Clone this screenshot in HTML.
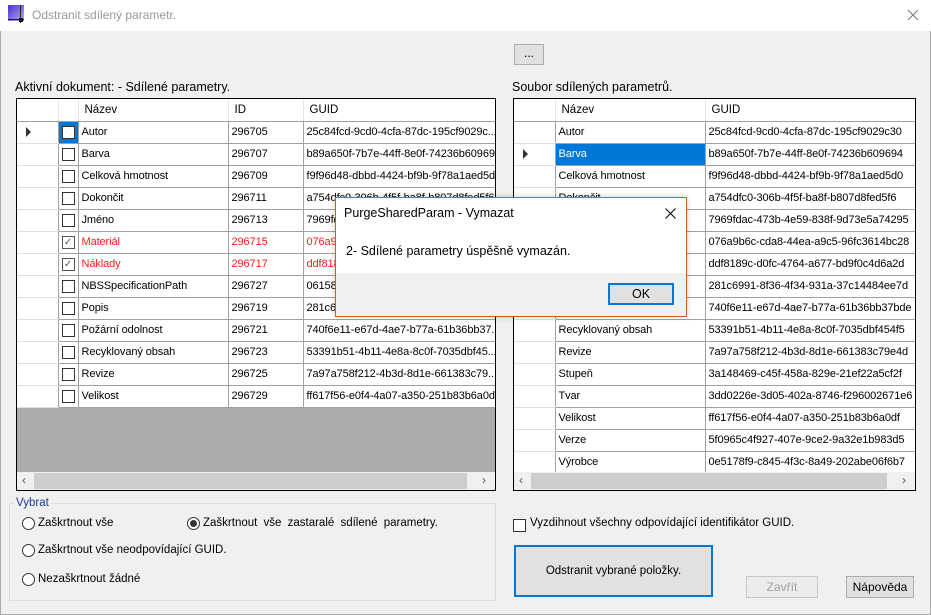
<!DOCTYPE html>
<html><head><meta charset="utf-8"><style>
*{box-sizing:border-box;margin:0;padding:0}
body{width:931px;height:615px;background:#f0f0f0;font-family:"Liberation Sans",sans-serif;font-size:12px;color:#000;position:relative;overflow:hidden}
.a{position:absolute}
.win{left:0;top:0;width:931px;height:615px;border:1px solid #aaa;border-top:none}
.title{left:0;top:0;width:931px;height:31px;background:#fff}
.grid{background:#fff;border:1px solid #000;overflow:hidden}
table{border-collapse:collapse;table-layout:fixed;font-size:11px}
td{height:22px;border:1px solid #a0a0a0;padding:0 3px;white-space:nowrap;overflow:hidden;letter-spacing:-0.1px}
th{height:22px;font-weight:normal;text-align:left;padding:0 6px;border-right:1px solid #e6e6e6;border-bottom:1px solid #a0a0a0;background:#fff;font-size:11.5px}
td.rh{border-left:none;border-color:#a0a0a0 #a0a0a0 #e0e0e0 #a0a0a0}
.cb{display:inline-block;width:13px;height:13px;border:1px solid #333;background:#fff;vertical-align:middle;position:relative}
.red{color:#ff1a1a}
.tri{display:inline-block;width:0;height:0;border-left:5px solid #333;border-top:5px solid transparent;border-bottom:5px solid transparent;margin-left:6px;vertical-align:middle}
.sb{background:#f0f0f0}
.btn{background:#e1e1e1;border:1px solid #adadad;text-align:center}
.rad{width:13px;height:13px;border:1px solid #333;border-radius:50%;background:#fff}
</style></head><body>
<div class="a win"></div>
<div class="a title"></div>
<svg class="a" style="left:8px;top:5px" width="17" height="18"><defs><linearGradient id="g" x1="0" y1="0" x2="1" y2="1"><stop offset="0" stop-color="#4a2fd0"/><stop offset="1" stop-color="#b7aaf0"/></linearGradient></defs><rect x="0" y="0" width="16" height="16" fill="url(#g)"/><path d="M0 14.5H16M12.5 0V18" stroke="#222" stroke-width="1"/><rect x="11" y="13" width="4" height="4" fill="#111"/></svg>
<div class="a" style="left:32px;top:8px;font-size:12px;color:#999">Odstranit sdílený parametr.</div>
<svg class="a" style="left:907px;top:9px" width="12" height="12"><path d="M1 1L11 11M11 1L1 11" stroke="#777" stroke-width="1"/></svg>

<div class="a btn" style="left:514px;top:44px;width:30px;height:21px;line-height:17px">...</div>

<div class="a" style="left:15px;top:80px;font-size:12.5px">Aktivní dokument: - Sdílené parametry.</div>
<div class="a" style="left:512px;top:80px;font-size:12.5px">Soubor sdílených parametrů.</div>

<div class="a grid" style="left:16px;top:98px;width:480px;height:393px;background:#ababab">
<table style="width:478px;background:#fff">
<colgroup><col style="width:41px"><col style="width:20px"><col style="width:150px"><col style="width:75px"><col style="width:192px"></colgroup>
<tr><th></th><th></th><th>Název</th><th>ID</th><th>GUID</th></tr>
<tr><td class="rh"><span class="tri"></span></td><td style="padding:0 3px;background:#0078d7"><span class="cb"></span></td><td>Autor</td><td>296705</td><td>25c84fcd-9cd0-4cfa-87dc-195cf9029c...</td></tr>
<tr><td class="rh"></td><td><span class="cb"></span></td><td>Barva</td><td>296707</td><td>b89a650f-7b7e-44ff-8e0f-74236b609694</td></tr>
<tr><td class="rh"></td><td><span class="cb"></span></td><td>Celková hmotnost</td><td>296709</td><td>f9f96d48-dbbd-4424-bf9b-9f78a1aed5d0</td></tr>
<tr><td class="rh"></td><td><span class="cb"></span></td><td>Dokončit</td><td>296711</td><td>a754dfc0-306b-4f5f-ba8f-b807d8fed5f6</td></tr>
<tr><td class="rh"></td><td><span class="cb"></span></td><td>Jméno</td><td>296713</td><td>7969fdac-473b-4e59-838f-9d73e5a74295</td></tr>
<tr class="red"><td class="rh"></td><td><span class="cb" style="border-color:#555;color:#555;font-size:10px;line-height:11px;text-align:center">✓</span></td><td>Materiál</td><td>296715</td><td>076a9b6c-cda8-44ea-a9c5-96fc3614bc28</td></tr>
<tr class="red"><td class="rh"></td><td><span class="cb" style="border-color:#555;color:#555;font-size:10px;line-height:11px;text-align:center">✓</span></td><td>Náklady</td><td>296717</td><td>ddf8189c-d0fc-4764-a677-bd9f0c4d6a2d</td></tr>
<tr><td class="rh"></td><td><span class="cb"></span></td><td>NBSSpecificationPath</td><td>296727</td><td>06158f00-1234-4a5b-9c8d-0e1f2a3b4c5d</td></tr>
<tr><td class="rh"></td><td><span class="cb"></span></td><td>Popis</td><td>296719</td><td>281c6991-8f36-4f34-931a-37c14484ee7d</td></tr>
<tr><td class="rh"></td><td><span class="cb"></span></td><td>Požární odolnost</td><td>296721</td><td>740f6e11-e67d-4ae7-b77a-61b36bb37...</td></tr>
<tr><td class="rh"></td><td><span class="cb"></span></td><td>Recyklovaný obsah</td><td>296723</td><td>53391b51-4b11-4e8a-8c0f-7035dbf45...</td></tr>
<tr><td class="rh"></td><td><span class="cb"></span></td><td>Revize</td><td>296725</td><td>7a97a758f212-4b3d-8d1e-661383c79...</td></tr>
<tr><td class="rh"></td><td><span class="cb"></span></td><td>Velikost</td><td>296729</td><td>ff617f56-e0f4-4a07-a350-251b83b6a0df</td></tr>
</table>
<div class="a sb" style="left:0;top:373px;width:478px;height:18px"><div class="a" style="left:17px;top:1px;width:433px;height:16px;background:#cdcdcd"></div><span class="a" style="left:5px;top:1px;color:#555;font-size:12px">‹</span><span class="a" style="left:465px;top:1px;color:#555;font-size:12px">›</span></div>
</div>

<div class="a grid" style="left:513px;top:98px;width:403px;height:393px">
<table style="width:401px">
<colgroup><col style="width:41px"><col style="width:150px"><col style="width:210px"></colgroup>
<tr><th></th><th>Název</th><th>GUID</th></tr>
<tr><td class="rh"></td><td>Autor</td><td>25c84fcd-9cd0-4cfa-87dc-195cf9029c30</td></tr>
<tr><td class="rh"><span class="tri"></span></td><td style="background:#0078d7;color:#fff">Barva</td><td>b89a650f-7b7e-44ff-8e0f-74236b609694</td></tr>
<tr><td class="rh"></td><td>Celková hmotnost</td><td>f9f96d48-dbbd-4424-bf9b-9f78a1aed5d0</td></tr>
<tr><td class="rh"></td><td>Dokončit</td><td>a754dfc0-306b-4f5f-ba8f-b807d8fed5f6</td></tr>
<tr><td class="rh"></td><td>Jméno</td><td>7969fdac-473b-4e59-838f-9d73e5a74295</td></tr>
<tr><td class="rh"></td><td>Materiál</td><td>076a9b6c-cda8-44ea-a9c5-96fc3614bc28</td></tr>
<tr><td class="rh"></td><td>Náklady</td><td>ddf8189c-d0fc-4764-a677-bd9f0c4d6a2d</td></tr>
<tr><td class="rh"></td><td>Popis</td><td>281c6991-8f36-4f34-931a-37c14484ee7d</td></tr>
<tr><td class="rh"></td><td>Požární odolnost</td><td>740f6e11-e67d-4ae7-b77a-61b36bb37bde</td></tr>
<tr><td class="rh"></td><td>Recyklovaný obsah</td><td>53391b51-4b11-4e8a-8c0f-7035dbf454f5</td></tr>
<tr><td class="rh"></td><td>Revize</td><td>7a97a758f212-4b3d-8d1e-661383c79e4d</td></tr>
<tr><td class="rh"></td><td>Stupeň</td><td>3a148469-c45f-458a-829e-21ef22a5cf2f</td></tr>
<tr><td class="rh"></td><td>Tvar</td><td>3dd0226e-3d05-402a-8746-f296002671e6</td></tr>
<tr><td class="rh"></td><td>Velikost</td><td>ff617f56-e0f4-4a07-a350-251b83b6a0df</td></tr>
<tr><td class="rh"></td><td>Verze</td><td>5f0965c4f927-407e-9ce2-9a32e1b983d5</td></tr>
<tr><td class="rh"></td><td>Výrobce</td><td>0e5178f9-c845-4f3c-8a49-202abe06f6b7</td></tr>
</table>
<div class="a sb" style="left:0;top:373px;width:401px;height:18px"><div class="a" style="left:17px;top:1px;width:356px;height:16px;background:#cdcdcd"></div><span class="a" style="left:5px;top:1px;color:#555;font-size:12px">‹</span><span class="a" style="left:388px;top:1px;color:#555;font-size:12px">›</span></div>
</div>

<!-- dialog -->
<div class="a" style="left:335px;top:197px;width:352px;height:120px;border:1px solid #c0622c;background:#fff;box-shadow:0 0 6px rgba(0,0,0,.2)">
<div class="a" style="left:8px;top:8px;font-size:12.5px">PurgeSharedParam - Vymazat</div>
<svg class="a" style="left:329px;top:10px" width="11" height="11"><path d="M0.5 0.5L10.5 10.5M10.5 0.5L0.5 10.5" stroke="#000" stroke-width="1"/></svg>
<div class="a" style="left:10px;top:46px;font-size:12.5px">2- Sdílené parametry úspěšně vymazán.</div>
<div class="a" style="left:0;top:75px;width:350px;height:43px;background:#f0f0f0"></div>
<div class="a btn" style="left:272px;top:85px;width:66px;height:22px;border:2px solid #0078d7;line-height:18px;font-size:12.5px">OK</div>
</div>

<!-- group -->
<div class="a" style="left:9px;top:503px;width:487px;height:98px;border:1px solid #dcdcdc"></div>
<div class="a" style="left:14px;top:497px;background:#f0f0f0;padding:0 2px;color:#1a3a8a;font-size:11.5px">Vybrat</div>
<div class="a rad" style="left:22px;top:517px"></div><div class="a" style="left:38px;top:517px;font-size:11.5px">Zaškrtnout vše</div>
<div class="a rad" style="left:187px;top:517px"></div><div class="a" style="left:190px;top:520px;width:7px;height:7px;border-radius:50%;background:#333"></div><div class="a" style="left:203px;top:517px;word-spacing:3px;font-size:11.5px">Zaškrtnout vše zastaralé sdílené parametry.</div>
<div class="a rad" style="left:22px;top:544px"></div><div class="a" style="left:38px;top:544px;font-size:11.5px">Zaškrtnout vše neodpovídající GUID.</div>
<div class="a rad" style="left:22px;top:573px"></div><div class="a" style="left:38px;top:573px;font-size:11.5px">Nezaškrtnout žádné</div>

<div class="a cb" style="left:513px;top:518px"></div><div class="a" style="left:530px;top:517px;font-size:11.5px">Vyzdihnout všechny odpovídající identifikátor GUID.</div>
<div class="a btn" style="left:514px;top:545px;width:199px;height:52px;border:2px solid #0078d7;line-height:48px;font-size:11.5px">Odstranit vybrané položky.</div>
<div class="a btn" style="left:746px;top:576px;width:72px;height:22px;line-height:20px;color:#a0a0a0;background:#ececec;border-color:#c8c8c8">Zavřít</div>
<div class="a btn" style="left:846px;top:576px;width:68px;height:22px;line-height:20px">Nápověda</div>
</body></html>
